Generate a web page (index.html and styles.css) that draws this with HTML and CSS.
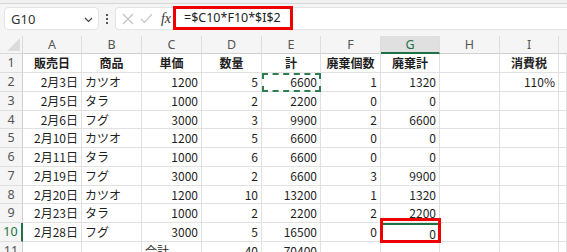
FILE: index.html
```html
<!DOCTYPE html>
<html lang="ja">
<head>
<meta charset="utf-8">
<link rel="stylesheet" href="styles.css">
</head>
<body>
<div class="topstrip"></div>
<div class="fbar">
  <div class="namebox"><span class="name">G10</span>
    <svg class="chev" width="9" height="6" viewBox="0 0 9 6"><path d="M1 1 L4.5 4.5 L8 1" fill="none" stroke="#444" stroke-width="1.2"/></svg>
  </div>
  <div class="dots"><i></i><i></i><i></i></div>
  <div class="fxbox">
    <svg width="12" height="12" viewBox="0 0 12 12"><path d="M1 1 L11 11 M11 1 L1 11" stroke="#c4c4c4" stroke-width="1.2"/></svg>
    <svg width="13" height="11" viewBox="0 0 13 11"><path d="M1 6 L4.5 9.5 L12 1" fill="none" stroke="#c4c4c4" stroke-width="1.2"/></svg>
    <span class="fx">fx</span>
  </div>
  <div class="formula"><span class="ftext">=$C10*F10*$I$2</span></div>
</div>
<div class="sheet">
  <div class="corner"></div>
  <div class="ch">A</div><div class="ch">B</div><div class="ch">C</div><div class="ch">D</div><div class="ch">E</div><div class="ch">F</div><div class="ch sel">G</div><div class="ch">H</div><div class="ch">I</div><div class="ch last"></div>

  <div class="rh">1</div>
  <div class="c b ctr">販売日</div><div class="c b ctr">商品</div><div class="c b ctr">単価</div><div class="c b ctr">数量</div><div class="c b ctr">計</div><div class="c b ctr">廃棄個数</div><div class="c b ctr">廃棄計</div><div class="c"></div><div class="c b ctr">消費税</div><div class="c"></div>

  <div class="rh">2</div>
  <div class="c r">2月3日</div><div class="c">カツオ</div><div class="c r">1200</div><div class="c r">5</div><div class="c r ants">6600</div><div class="c r">1</div><div class="c r">1320</div><div class="c"></div><div class="c r">110%</div><div class="c"></div>

  <div class="rh">3</div>
  <div class="c r">2月5日</div><div class="c">タラ</div><div class="c r">1000</div><div class="c r">2</div><div class="c r">2200</div><div class="c r">0</div><div class="c r">0</div><div class="c"></div><div class="c"></div><div class="c"></div>

  <div class="rh">4</div>
  <div class="c r">2月6日</div><div class="c">フグ</div><div class="c r">3000</div><div class="c r">3</div><div class="c r">9900</div><div class="c r">2</div><div class="c r">6600</div><div class="c"></div><div class="c"></div><div class="c"></div>

  <div class="rh">5</div>
  <div class="c r">2月10日</div><div class="c">カツオ</div><div class="c r">1200</div><div class="c r">5</div><div class="c r">6600</div><div class="c r">0</div><div class="c r">0</div><div class="c"></div><div class="c"></div><div class="c"></div>

  <div class="rh">6</div>
  <div class="c r">2月11日</div><div class="c">タラ</div><div class="c r">1000</div><div class="c r">6</div><div class="c r">6600</div><div class="c r">0</div><div class="c r">0</div><div class="c"></div><div class="c"></div><div class="c"></div>

  <div class="rh">7</div>
  <div class="c r">2月19日</div><div class="c">フグ</div><div class="c r">3000</div><div class="c r">2</div><div class="c r">6600</div><div class="c r">3</div><div class="c r">9900</div><div class="c"></div><div class="c"></div><div class="c"></div>

  <div class="rh">8</div>
  <div class="c r">2月20日</div><div class="c">カツオ</div><div class="c r">1200</div><div class="c r">10</div><div class="c r">13200</div><div class="c r">1</div><div class="c r">1320</div><div class="c"></div><div class="c"></div><div class="c"></div>

  <div class="rh">9</div>
  <div class="c r">2月23日</div><div class="c">タラ</div><div class="c r">1000</div><div class="c r">2</div><div class="c r">2200</div><div class="c r">2</div><div class="c r">2200</div><div class="c"></div><div class="c"></div><div class="c"></div>

  <div class="rh selrow">10</div>
  <div class="c r">2月28日</div><div class="c">フグ</div><div class="c r">3000</div><div class="c r">5</div><div class="c r">16500</div><div class="c r">0</div><div class="c r active">0</div><div class="c"></div><div class="c"></div><div class="c"></div>

  <div class="rh">11</div>
  <div class="c"></div><div class="c"></div><div class="c">合計</div><div class="c r">40</div><div class="c r">70400</div><div class="c"></div><div class="c"></div><div class="c"></div><div class="c"></div><div class="c"></div>
</div>
</body>
</html>
```

FILE: styles.css
```css
* { box-sizing: border-box; }
html, body { margin: 0; padding: 0; }
body {
  width: 567px;
  height: 252px;
  overflow: hidden;
  background: #ffffff;
  font-family: "Noto Sans CJK JP", "Noto Sans", sans-serif;
  color: #1f1f1f;
}
.topstrip {
  height: 4px;
  background: #f0f0f0;
  border-bottom: 1px solid #d6d6d6;
}
.fbar {
  height: 32px;
  background: #f5f5f5;
  display: flex;
  align-items: flex-start;
  padding: 3px 0 0 4px;
}
.namebox {
  width: 95px;
  height: 23px;
  background: #fff;
  border: 1px solid #e3e3e3;
  border-radius: 4px;
  display: flex;
  align-items: center;
  justify-content: space-between;
  padding: 0 5px 0 6px;
}
.name {
  font-family: "Noto Sans", sans-serif;
  font-size: 13px;
  color: #333;
}
.chev { margin-top: 2px; }
.dots {
  width: 16px;
  height: 23px;
  display: flex;
  flex-direction: column;
  align-items: center;
  justify-content: center;
  gap: 2px;
}
.dots i {
  display: block;
  width: 2px;
  height: 2px;
  background: #555;
}
.fxbox {
  width: 56px;
  height: 23px;
  background: #fff;
  border: 1px solid #e3e3e3;
  border-right: none;
  border-radius: 4px 0 0 4px;
  display: flex;
  align-items: center;
  gap: 6px;
  padding-left: 6px;
}
.fx {
  font-family: "Liberation Serif", serif;
  font-style: italic;
  font-size: 14px;
  color: #333;
  margin-left: 2px;
}
.formula {
  flex: 1;
  height: 23px;
  background: #fff;
  border-top: 1px solid #e3e3e3;
  border-bottom: 1px solid #e3e3e3;
  display: flex;
  align-items: center;
  position: relative;
}
.ftext {
  display: inline-block;
  height: 24px;
  margin-top: -1px;
  padding: 0 9px 0 8px;
  border: 3px solid #ee0000;
  font-family: "Noto Sans", sans-serif;
  font-size: 12.5px;
  line-height: 18px;
  color: #222;
  margin-left: 2px;
}
.sheet {
  display: grid;
  grid-template-columns: 23px 59px 60px 60px 60px 59px 60px 59px 60px 59px 1fr;
  grid-template-rows: 18px 19px 19px 19px 18px 19px 19px 19px 18px 19px 19px 19px;
}
.corner {
  background: #f5f5f5;
  border-right: 1px solid #d9d9d9;
  border-bottom: 1px solid #d9d9d9;
  position: relative;
}
.corner::after {
  content: "";
  position: absolute;
  right: 2px;
  bottom: 2px;
  width: 0;
  height: 0;
  border-left: 13px solid transparent;
  border-bottom: 13px solid #dcdcdc;
}
.ch {
  background: #f5f5f5;
  border-right: 1px solid #dedede;
  border-bottom: 1px solid #d0d0d0;
  font-family: "Noto Sans", sans-serif;
  font-size: 12.5px;
  color: #555;
  text-align: center;
  line-height: 17px;
}
.ch.sel {
  background: #e0e0e0;
  color: #1e7145;
  border-bottom: 2px solid #1e7145;
}
.ch.last { border-right: none; }
.rh {
  background: #f5f5f5;
  border-right: 1px solid #d0d0d0;
  border-bottom: 1px solid #dedede;
  font-family: "Noto Sans", sans-serif;
  font-size: 12.5px;
  color: #555;
  text-align: center;
  line-height: 18px;
}
.rh.selrow {
  color: #1e7145;
  border-right: 2px solid #1e7145;
}
.c {
  border-right: 1px solid #e1e1e1;
  border-bottom: 1px solid #e1e1e1;
  font-size: 12px;
  line-height: 18px;
  padding: 0 3px 0 3px;
  white-space: nowrap;
  overflow: visible;
  color: #1f1f1f;
}
.c.r { text-align: right; }
.c.ctr { text-align: center; }
.c.b { font-weight: bold; }
.ants {
  outline: 2px dashed #2e7d4f;
  outline-offset: -2px;
}
.active {
  position: relative;
  border-top: 2px solid #1e7145;
}
.active::after {
  content: "";
  position: absolute;
  left: -1px;
  top: -7px;
  right: -2px;
  bottom: -2px;
  border: 3px solid #ee0000;
}
```
